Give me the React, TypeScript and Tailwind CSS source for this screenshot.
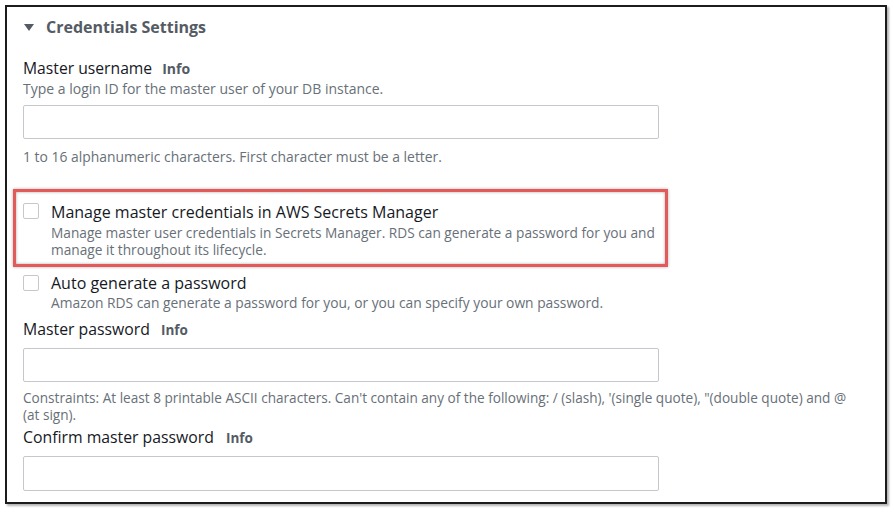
export default function App() {
  const font = { fontFamily: '"Open Sans", "Noto Sans", Arial, sans-serif' };
  return (
    <div className="w-[894px] h-[515px] bg-white overflow-hidden" style={font}>
      <div className="ml-[5px] mt-[5px] w-[882px] h-[499px] border-2 border-[#1c1c1c] shadow-[2px_2px_2px_rgba(0,0,0,0.3)] flex flex-col px-[16px] bg-white">
        {/* Header */}
        <div className="h-[40px] flex items-center shrink-0">
          <svg width="10" height="7" viewBox="0 0 10 7" className="ml-[1px]">
            <polygon points="0,0 10,0 5,7" fill="#545b64" />
          </svg>
          <span className="ml-[12px] text-[16px] leading-[22px] font-bold text-[#545b64]">Credentials Settings</span>
        </div>

        {/* Master username */}
        <div className="mt-[10px] h-[22px] flex items-baseline shrink-0">
          <span className="text-[15.7px] leading-[22px] text-[#16191f]">Master username</span>
          <span className="ml-[10px] text-[14px] font-bold text-[#545b64]">Info</span>
        </div>
        <div className="mt-[1px] text-[14px] leading-[18px] text-[#687078] shrink-0">Type a login ID for the master user of your DB instance.</div>
        <div className="mt-[7px] w-[636px] h-[34px] border border-[#c4c8cc] rounded-[2px] shrink-0" />
        <div className="mt-[9px] text-[13.9px] leading-[18px] text-[#687078] shrink-0">1 to 16 alphanumeric characters. First character must be a letter.</div>

        {/* Highlighted option */}
        <div className="mt-[23px] -ml-[10px] w-[655px] h-[78px] border-[3px] border-[#e35a5a] shadow-[inset_0_0_3px_rgba(0,0,0,0.35),0_0_3px_rgba(0,0,0,0.3)] flex pl-[7px] pt-[10px] shrink-0">
          <div className="mt-[1px] w-[16px] h-[16px] border border-[#c4c8cc] rounded-[2px] shrink-0" />
          <div className="ml-[12px] flex flex-col">
            <span className="text-[16px] leading-[20px] text-[#16191f] whitespace-nowrap">Manage master credentials in AWS Secrets Manager</span>
            <span className="mt-[2px] text-[13.7px] leading-[17px] text-[#687078] w-[612px]">Manage master user credentials in Secrets Manager. RDS can generate a password for you and manage it throughout its lifecycle.</span>
          </div>
        </div>

        {/* Auto generate */}
        <div className="mt-[6px] flex shrink-0">
          <div className="mt-[2px] w-[16px] h-[16px] border border-[#c4c8cc] rounded-[2px] shrink-0" />
          <div className="ml-[12px] flex flex-col">
            <span className="text-[16px] leading-[20px] text-[#16191f]">Auto generate a password</span>
            <span className="mt-[1px] text-[13.8px] leading-[17px] text-[#687078]">Amazon RDS can generate a password for you, or you can specify your own password.</span>
          </div>
        </div>

        {/* Master password */}
        <div className="mt-[7px] h-[22px] flex items-baseline shrink-0">
          <span className="text-[15.8px] leading-[22px] text-[#16191f]">Master password</span>
          <span className="ml-[11px] text-[13.5px] font-bold text-[#545b64]">Info</span>
        </div>
        <div className="mt-[8px] w-[636px] h-[34px] border border-[#c4c8cc] rounded-[2px] shrink-0" />
        <div className="mt-[7px] w-[840px] text-[13.6px] leading-[17px] text-[#687078] shrink-0">Constraints: At least 8 printable ASCII characters. Can't contain any of the following: / (slash), '(single quote), "(double quote) and @ (at sign).</div>

        {/* Confirm */}
        <div className="mt-[3px] h-[22px] flex items-baseline shrink-0">
          <span className="text-[15.8px] leading-[22px] text-[#16191f]">Confirm master password</span>
          <span className="ml-[12px] text-[13.5px] font-bold text-[#545b64]">Info</span>
        </div>
        <div className="mt-[8px] w-[636px] h-[35px] border border-[#c4c8cc] rounded-[2px] shrink-0" />
      </div>
    </div>
  );
}
